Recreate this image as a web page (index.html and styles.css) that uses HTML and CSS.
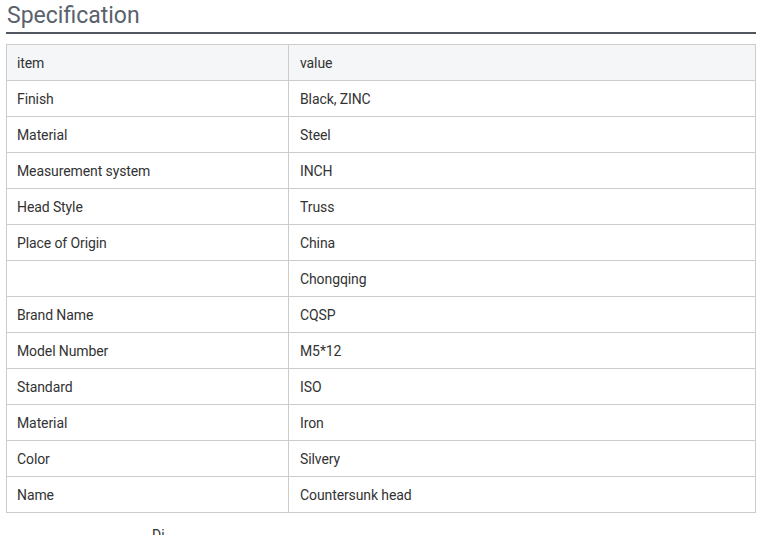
FILE: index.html
```html
<!DOCTYPE html>
<html>
<head>
<meta charset="utf-8">
<link rel="stylesheet" href="styles.css">
</head>
<body>
<div class="spec">
  <h2 class="spec-title">Specification</h2>
  <table class="spec-table">
    <tr class="head"><td class="c1">item</td><td>value</td></tr>
    <tr><td class="c1">Finish</td><td>Black, ZINC</td></tr>
    <tr><td class="c1">Material</td><td>Steel</td></tr>
    <tr><td class="c1">Measurement system</td><td>INCH</td></tr>
    <tr><td class="c1">Head Style</td><td>Truss</td></tr>
    <tr><td class="c1">Place of Origin</td><td>China</td></tr>
    <tr><td class="c1"></td><td>Chongqing</td></tr>
    <tr><td class="c1">Brand Name</td><td>CQSP</td></tr>
    <tr><td class="c1">Model Number</td><td>M5*12</td></tr>
    <tr><td class="c1">Standard</td><td>ISO</td></tr>
    <tr><td class="c1">Material</td><td>Iron</td></tr>
    <tr><td class="c1">Color</td><td>Silvery</td></tr>
    <tr><td class="c1">Name</td><td>Countersunk head</td></tr>
  </table>
  <div class="after">Di</div>
</div>
</body>
</html>
```
FILE: styles.css
```css
html, body { margin: 0; padding: 0; background: #fff; }
body { font-family: Roboto, "Liberation Sans", sans-serif; }
.spec { padding: 0 7px 0 6px; width: 750px; }
.spec-title {
  margin: 0;
  font-weight: 400;
  font-size: 23px;
  line-height: 32px;
  color: #5a626c;
  padding-left: 1px;
  border-bottom: 2px solid #50575f;
}
.spec-table {
  margin-top: 10px;
  width: 750px;
  border-collapse: collapse;
  table-layout: fixed;
  font-size: 14px;
  letter-spacing: -0.1px;
  color: #333;
}
.spec-table td {
  border: 1px solid #ccc;
  height: 36px;
  padding: 0 10px 0 11px;
  box-sizing: border-box;
  vertical-align: middle;
}
.spec-table td.c1 { width: 282px; padding-left: 10px; }
.spec-table .head td { background: #f5f6f8; }
.after { margin: 14px 0 0 146px; font-size: 14px; color: #333; height: 20px; }
```
